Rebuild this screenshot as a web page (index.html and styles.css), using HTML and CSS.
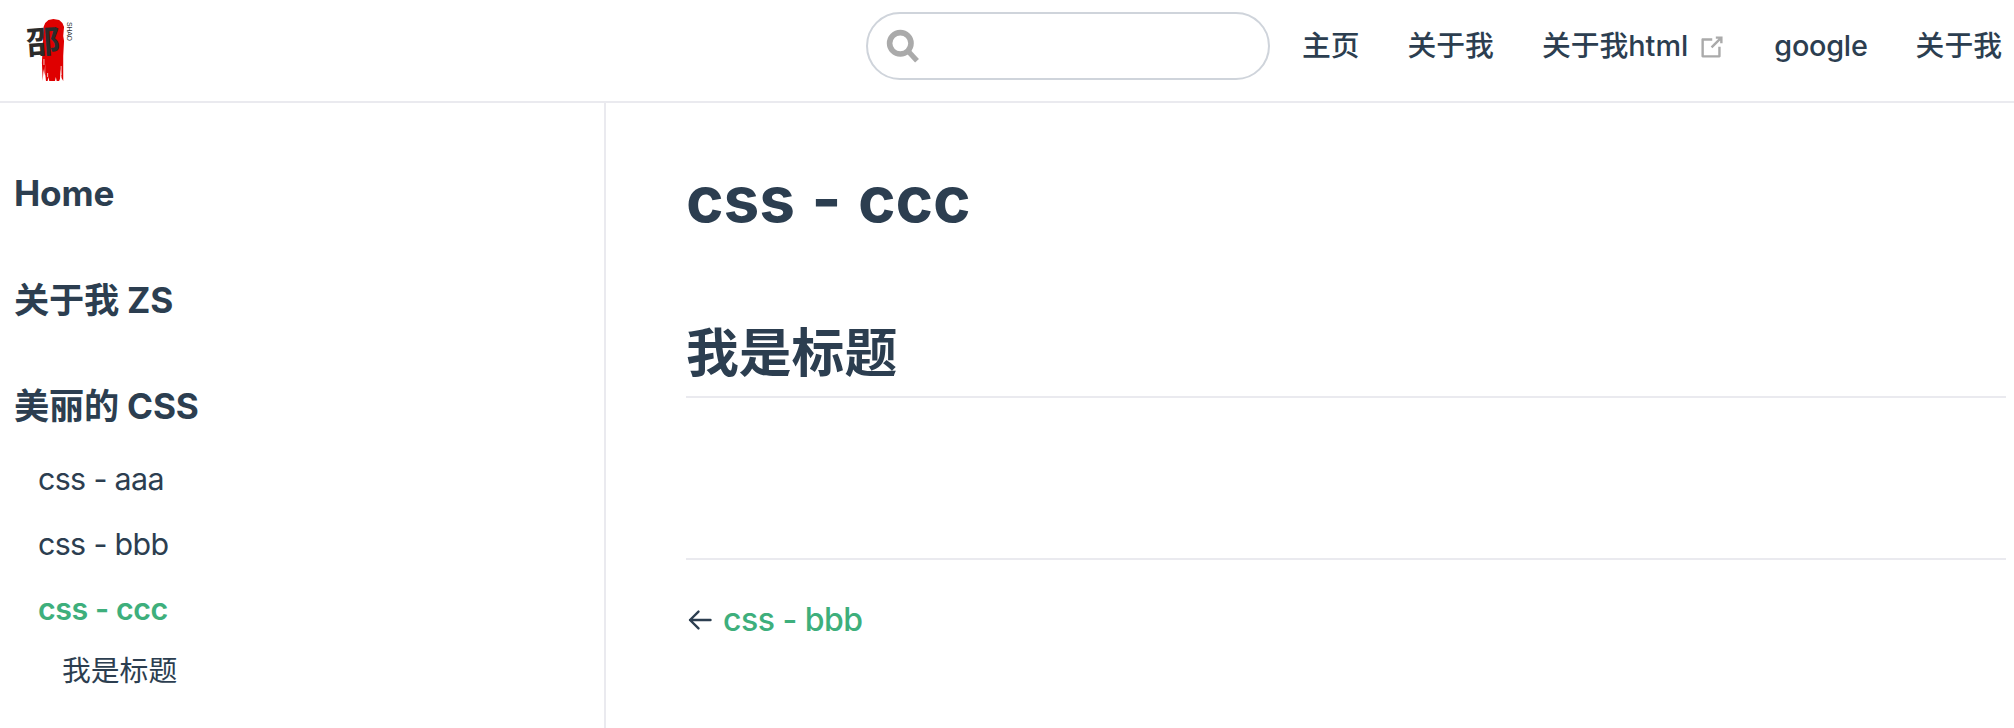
FILE: index.html
```html
<!DOCTYPE html>
<html lang="zh-CN">
<head>
<meta charset="utf-8">
<title>css - ccc</title>
<link rel="stylesheet" href="styles.css">
</head>
<body>
<header class="navbar">
  <a class="logo" aria-label="Home">
    <svg width="80" height="97" viewBox="-10 -17 80 97">
      <g transform="translate(3.600 0) scale(.82 1)">
        <path fill="#df0000" d="M17 10 L19 6 L23 3 L29 2 L36 3 L40 6 L42 10 L41 19 L42 24 L41 39 L41 64 L39 61 L38 52 L37 62 L36 64 L33 64 L32 60 L31 64 L24 64 L23 60 L22 64 L20 64 L19 58 L19 47 L18 58 L17 52 L16 64 L15 46 L16 29 Z"/>
        <path stroke="#fff" stroke-width=".8" d="M17.500 42V48M18.500 58V62M22 56V60M38.500 49V58"/>
      </g>
      <text class="logo-mark" transform="translate(1 37.500) rotate(-4) scale(1 .94)">邵</text>
      <text class="logo-name" transform="translate(40.700 5) rotate(90)" textLength="19">SHAO</text>
    </svg>
  </a>
  <div class="links">
    <div class="search">
      <svg width="34" height="36" viewBox="0 0 34 36" fill="none" stroke="#aaa">
        <circle cx="15.300" cy="15.300" r="10.700" stroke-width="5.600"/>
        <path d="M22.500 22.500 32 32.800" stroke-width="5.200"/>
      </svg>
    </div>
    <nav class="nav">
      <a>主页</a>
      <a>关于我</a>
      <a class="external">关于我<span class="html">html</span><svg width="30" height="30" viewBox="0 0 100 100" fill="#aaa"><path d="M18.800 85.100h56c2.200 0 4-1.800 4-4v-32h-8v28h-48v-48h28v-8h-32c-2.200 0-4 1.800-4 4v56c0 2.200 1.800 4 4 4z"/><polygon points="45.700,48.700 51.300,54.300 77.200,28.500 77.200,37.200 85.200,37.200 85.200,14.900 62.800,14.900 62.800,22.900 71.500,22.900"/></svg></a>
      <a class="google">google</a>
      <a>关于我</a>
    </nav>
  </div>
</header>
<div class="layout">
  <aside class="sidebar">
    <p class="group">Home</p>
    <p class="group">关于我 ZS</p>
    <p class="group">美丽的 CSS</p>
    <ul class="pages">
      <li>css - aaa</li>
      <li>css - bbb</li>
      <li class="active">css - ccc</li>
    </ul>
    <p class="sub">我是标题</p>
  </aside>
  <main class="content">
    <h1>css - ccc</h1>
    <h2>我是标题</h2>
    <div class="page-nav">
      <svg width="26" height="24" viewBox="0 0 26 24" fill="none" stroke="#2c3e50" stroke-width="2.400" stroke-linecap="round" stroke-linejoin="round"><path d="M24.500 12H4M12.500 3.600 4 12l8.500 8.400"/></svg>
      <a>css - bbb</a>
    </div>
  </main>
</div>
</body>
</html>
```
FILE: styles.css
```css
* { box-sizing: border-box; }
body {
  margin: 0;
  height: 728px;
  overflow: hidden;
  display: flex;
  flex-direction: column;
  background: #fff;
  color: #2c3e50;
  font-family: Inter, "Noto Sans CJK SC", sans-serif;
}
p, h1, h2, ul { margin: 0; padding: 0; }
.navbar {
  flex: none;
  height: 103px;
  border-bottom: 2px solid #eaeaef;
  display: flex;
  justify-content: space-between;
  padding: 0 12px 0 16px;
}
.logo svg { display: block; }
.logo-mark { font: 700 34px "Noto Sans CJK SC", sans-serif; fill: #2b2b2b; }
.logo-name { font: 7px "Liberation Sans", sans-serif; fill: #333; }
.links { display: flex; gap: 32px; padding-top: 12px; height: 80px; }
.search {
  width: 404px;
  height: 68px;
  border: 2px solid #cfd4db;
  border-radius: 34px;
  padding: 14px 0 0 17px;
}
.search svg { display: block; }
.nav {
  display: flex;
  gap: 48px;
  font-size: 28.8px;
  font-weight: 500;
  line-height: 68px;
  white-space: nowrap;
}
.google { letter-spacing: -.22px; }
.external { display: flex; }
.external svg { margin: 20px -1px 0 9px; }
.layout { flex: 1; display: flex; min-height: 0; }
.sidebar {
  width: 606px;
  flex: none;
  border-right: 2px solid #eaeaef;
  padding-top: 66px;
}
.group {
  font-size: 35.2px;
  font-weight: 700;
  line-height: 48px;
  letter-spacing: -.2px;
  padding-left: 14px;
  margin-bottom: 58.5px;
}
.group:nth-of-type(3) { margin-bottom: 16.5px; }
.pages { list-style: none; font-size: 30.4px; line-height: 65px; padding-left: 38px; letter-spacing: -.65px; }
.active { color: #3eaf7c; font-weight: 600; letter-spacing: -.43px; }
.sub { font-size: 28.8px; line-height: 58px; padding-left: 62px; }
.content { flex: 1; padding: 52px 8px 0 80px; }
h1 { font-size: 64px; line-height: 88px; font-weight: 700; letter-spacing: -.1px; word-spacing: 1.5px; }
h2 {
  font-size: 52.8px;
  font-weight: 700;
  line-height: 66px;
  margin-top: 77px;
  height: 78px;
  border-bottom: 2px solid #eaeaef;
}
.page-nav {
  margin-top: 160px;
  border-top: 2px solid #eaeaef;
  display: flex;
  align-items: center;
  gap: 11px;
  padding-top: 37px;
  font-size: 32px;
  line-height: 46px;
}
.page-nav a { color: #3eaf7c; font-weight: 500; letter-spacing: -.5px; }
```
